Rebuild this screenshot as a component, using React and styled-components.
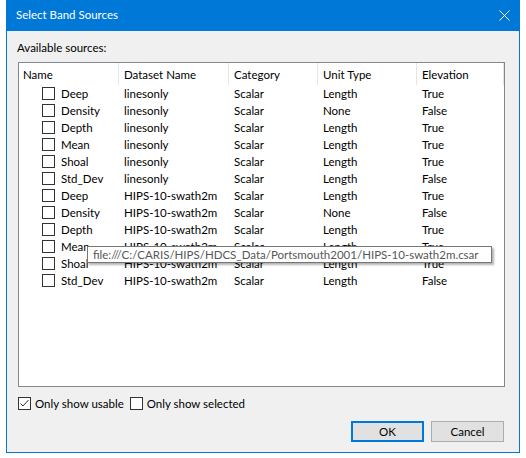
import React from 'react'
import styled, { createGlobalStyle } from 'styled-components'

const GlobalStyle = createGlobalStyle`
  body {
    margin: 0;
    background: #ffffff;
    font-family: Lato, "Noto Sans", sans-serif;
    font-size: 11.5px;
    color: #000;
  }
`

const rows = [
  { name: 'Deep', dataset: 'linesonly', unit: 'Length', elev: 'True' },
  { name: 'Density', dataset: 'linesonly', unit: 'None', elev: 'False' },
  { name: 'Depth', dataset: 'linesonly', unit: 'Length', elev: 'True' },
  { name: 'Mean', dataset: 'linesonly', unit: 'Length', elev: 'True' },
  { name: 'Shoal', dataset: 'linesonly', unit: 'Length', elev: 'True' },
  { name: 'Std_Dev', dataset: 'linesonly', unit: 'Length', elev: 'False' },
  { name: 'Deep', dataset: 'HIPS-10-swath2m', unit: 'Length', elev: 'True' },
  { name: 'Density', dataset: 'HIPS-10-swath2m', unit: 'None', elev: 'False' },
  { name: 'Depth', dataset: 'HIPS-10-swath2m', unit: 'Length', elev: 'True' },
  { name: 'Mean', dataset: 'HIPS-10-swath2m', unit: 'Length', elev: 'True' },
  { name: 'Shoal', dataset: 'HIPS-10-swath2m', unit: 'Length', elev: 'True' },
  { name: 'Std_Dev', dataset: 'HIPS-10-swath2m', unit: 'Length', elev: 'False' },
]

const CheckBox = ({ checked }) => (
  <Box>
    {checked && (
      <svg width="11" height="11" viewBox="0 0 11 11">
        <polyline points="1.5,5.5 4,8 9.5,2" fill="none" stroke="#333" strokeWidth="1" />
      </svg>
    )}
  </Box>
)

const App = () => {
  return (
    <>
      <GlobalStyle />
      <Window>
        <TitleBar>
          <span>Select Band Sources</span>
          <svg width="11" height="11" viewBox="0 0 11 11">
            <path d="M0.5 0.5 L10.5 10.5 M10.5 0.5 L0.5 10.5" stroke="#fff" strokeWidth="1" />
          </svg>
        </TitleBar>
        <Body>
          <Label>Available sources:</Label>
          <ListBox>
            <Header>
              <HeadCell first>Name</HeadCell>
              <HeadCell>Dataset Name</HeadCell>
              <HeadCell>Category</HeadCell>
              <HeadCell>Unit Type</HeadCell>
              <HeadCell>Elevation</HeadCell>
            </Header>
            {rows.map((r, i) => (
              <Row key={i}>
                <NameCell>
                  <CheckBox />
                  <span>{r.name}</span>
                </NameCell>
                <Cell>{r.dataset}</Cell>
                <Cell>Scalar</Cell>
                <Cell>{r.unit}</Cell>
                <Cell>{r.elev}</Cell>
              </Row>
            ))}
            <Tooltip>file:///C:/CARIS/HIPS/HDCS_Data/Portsmouth2001/HIPS-10-swath2m.csar</Tooltip>
          </ListBox>
          <Options>
            <Option>
              <CheckBox checked />
              <span>Only show usable</span>
            </Option>
            <Option>
              <CheckBox />
              <span>Only show selected</span>
            </Option>
          </Options>
          <Buttons>
            <Button primary>OK</Button>
            <Button>Cancel</Button>
          </Buttons>
        </Body>
      </Window>
    </>
  )
}

export default App

const cols = '100px 110px 89px 99px 87px'

const Window = styled.div`
  margin-left: 6px;
  width: 514px;
  height: 453px;
  box-sizing: border-box;
  border: 1px solid #0078d7;
  border-top: none;
  display: flex;
  flex-direction: column;
`
const TitleBar = styled.div`
  height: 31px;
  flex: none;
  background: #0078d7;
  color: #fff;
  display: flex;
  align-items: center;
  justify-content: space-between;
  padding: 0 9px 1px 9px;
  box-sizing: border-box;
  span { line-height: 16px; }
`
const Body = styled.div`
  flex: 1;
  background: #f0f0f0;
  display: flex;
  flex-direction: column;
`
const Label = styled.div`
  margin: 9px 0 0 10px;
  line-height: 16px;
`
const ListBox = styled.div`
  position: relative;
  margin: 6px 0 0 11px;
  width: 487px;
  height: 325px;
  box-sizing: border-box;
  border: 1px solid #828790;
  background: #fff;
`
const Header = styled.div`
  display: grid;
  grid-template-columns: ${cols};
  height: 22px;
`
const HeadCell = styled.div`
  display: flex;
  align-items: center;
  padding-left: ${(p) => (p.first ? 4 : 5)}px;
  border-right: 1px solid #e5e5e5;
`
const Row = styled.div`
  display: grid;
  grid-template-columns: ${cols};
  height: 17px;
  align-items: center;
`
const NameCell = styled.div`
  display: flex;
  align-items: center;
  gap: 6px;
  padding-left: 23px;
  white-space: nowrap;
`
const Cell = styled.div`
  padding-left: 5px;
  white-space: nowrap;
`
const Box = styled.div`
  width: 13px;
  height: 13px;
  flex: none;
  box-sizing: border-box;
  border: 1px solid #333;
  background: #fff;
  display: flex;
  align-items: center;
  justify-content: center;
`
const Tooltip = styled.div`
  position: absolute;
  left: 68px;
  top: 183px;
  width: 405px;
  height: 17px;
  box-sizing: border-box;
  border: 1px solid #767676;
  background: #fff;
  color: #575757;
  padding-left: 5px;
  line-height: 15px;
  box-shadow: 2px 2px 2px rgba(0, 0, 0, 0.3);
  white-space: nowrap;
`
const Options = styled.div`
  display: flex;
  gap: 6px;
  margin: 9px 0 0 11px;
`
const Option = styled.label`
  display: flex;
  align-items: center;
  gap: 4px;
  line-height: 15px;
`
const Buttons = styled.div`
  display: flex;
  justify-content: flex-end;
  gap: 7px;
  margin-top: 10px;
  padding-right: 15px;
`
const Button = styled.button`
  width: 73px;
  height: 21px;
  box-sizing: border-box;
  background: #e1e1e1;
  border: ${(p) => (p.primary ? '2px solid #0078d7' : '1px solid #adadad')};
  font: inherit;
  color: #000;
  padding: 0;
`
